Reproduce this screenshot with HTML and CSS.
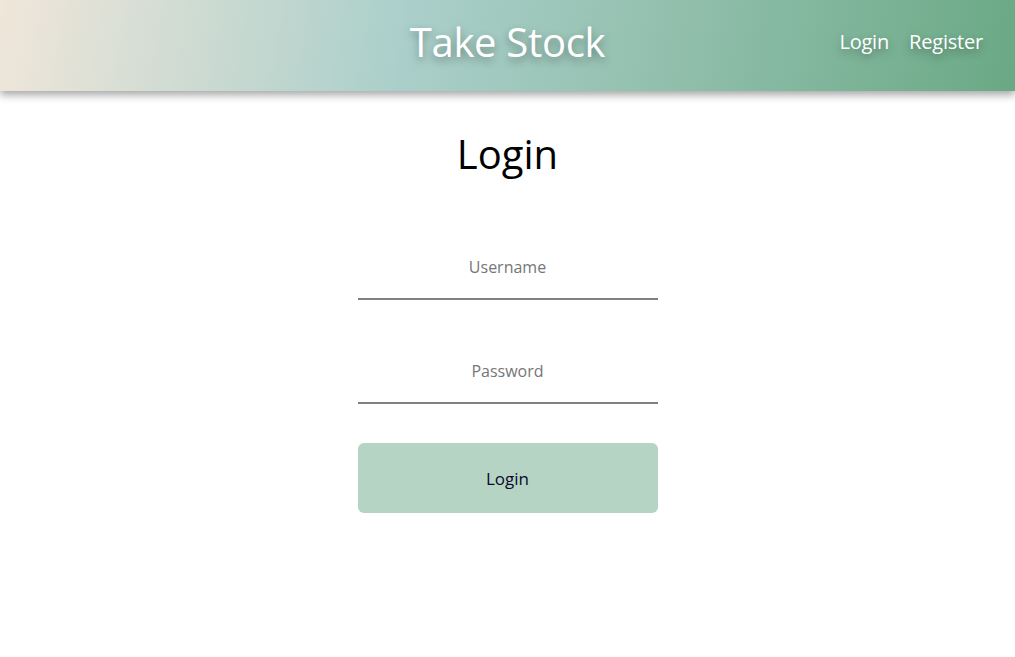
FILE: index.html
```html
<!DOCTYPE html>
<html lang="en">
<head>
<meta charset="utf-8">
<title>Take Stock</title>
<link rel="stylesheet" href="styles.css">
</head>
<body>
<header class="topbar">
  <div class="brand">Take Stock</div>
  <nav class="nav">
    <a href="#" class="nav-link">Login</a>
    <a href="#" class="nav-link">Register</a>
  </nav>
</header>
<main class="main">
  <h1 class="page-title">Login</h1>
  <form class="login-form">
    <input class="field" type="text" placeholder="Username">
    <input class="field" type="password" placeholder="Password">
    <button class="submit" type="button">Login</button>
  </form>
</main>
</body>
</html>
```

FILE: styles.css
```css
* { box-sizing: border-box; }
html, body { margin: 0; padding: 0; background: #fff; }
body { font-family: "Open Sans", "Noto Sans", sans-serif; color: #000; }

.topbar {
  height: 91px;
  position: relative;
  display: flex;
  align-items: center;
  justify-content: center;
  padding-bottom: 8px;
  background: linear-gradient(100deg, #f0e6da 0%, #aacfca 40%, #93c0ae 65%, #6aa985 100%);
  box-shadow: 0 4px 8px rgba(0,0,0,0.35);
}
.brand {
  font-size: 40px;
  font-weight: 400;
  color: #fff;
  text-shadow: 0 4px 8px rgba(0,0,0,0.35);
  letter-spacing: -0.3px;
}
.nav {
  position: absolute;
  right: 32px;
  top: 28px;
  display: flex;
  gap: 20px;
}
.nav-link {
  color: #fff;
  text-decoration: none;
  font-size: 20px;
  letter-spacing: -0.2px;
  text-shadow: 0 4px 8px rgba(0,0,0,0.35);
}

.main {
  display: flex;
  flex-direction: column;
  align-items: center;
}
.page-title {
  margin: 35px 0 0;
  font-size: 40px;
  font-weight: 400;
  line-height: 1.4;
}
.login-form {
  width: 300px;
  display: flex;
  flex-direction: column;
  margin-top: 50px;
}
.field {
  height: 68px;
  border: none;
  border-bottom: 2px solid #808080;
  text-align: center;
  font-family: inherit;
  font-size: 16px;
  outline: none;
  padding: 4px 0 0;
  margin-bottom: 36px;
}
.field + .field { margin-bottom: 39px; }
.field::placeholder { color: #767676; }
.submit {
  height: 70px;
  border: none;
  border-radius: 6px;
  background: #b6d4c3;
  font-family: inherit;
  font-size: 17px;
  color: #0a0a30;
}
```
